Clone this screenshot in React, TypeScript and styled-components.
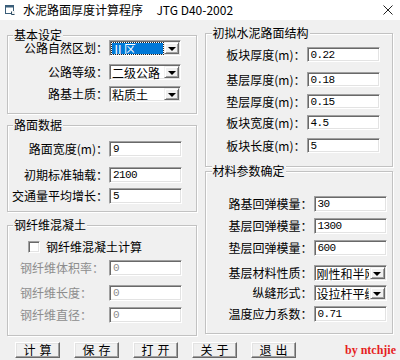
import styled, { createGlobalStyle } from "styled-components"

const Global = createGlobalStyle`
    html, body {
        margin: 0;
        padding: 0;
        background: #f0f0f0;
    }
    body {
        font-family: "Noto Sans CJK SC", "Liberation Sans", sans-serif;
        font-size: 12px;
        color: #000;
    }
`

const Window = styled.div`
    width: 400px;
    height: 360px;
    overflow: hidden;
    background: #f0f0f0;
    display: flex;
    flex-direction: column;
`

const TitleBar = styled.header`
    height: 20px;
    flex: none;
    background: #fff;
    display: flex;
    align-items: center;
    padding: 0 7px 0 5px;
`

const TitleText = styled.span`
    margin-left: 8px;
    font-size: 12px;
    line-height: 20px;
    white-space: pre;
    flex: 1;
`

const Body = styled.main`
    flex: 1;
    display: flex;
    flex-direction: column;
    padding: 0 7px;
`

const Columns = styled.div`
    display: flex;
    gap: 8px;
    align-items: flex-start;
`

const Column = styled.div<{ $w: number }>`
    width: ${p => p.$w}px;
    display: flex;
    flex-direction: column;
`

const Group = styled.section<{ $h: number, $mt: number }>`
    box-sizing: border-box;
    height: ${p => p.$h}px;
    margin-top: ${p => p.$mt}px;
    border: 1px solid #c2c2c2;
    box-shadow: inset 1px 1px 0 #fff, 1px 1px 0 #fff;
`

const Caption = styled.div<{ $ml?: number }>`
    width: fit-content;
    height: 12px;
    line-height: 12px;
    margin: -7px 0 -5px ${p => p.$ml ?? 5}px;
    padding: 0 1px;
    background: #f0f0f0;
    white-space: nowrap;
`

const Row = styled.div<{ $label: number, $field: number, $top: number, $h?: number }>`
    display: grid;
    grid-template-columns: ${p => p.$label}px ${p => p.$field}px;
    align-items: center;
    height: ${p => p.$h ?? 16}px;
    margin-top: ${p => p.$top}px;
`

const Label = styled.span<{ $left?: boolean, $muted?: boolean }>`
    white-space: nowrap;
    text-align: ${p => p.$left ? "left" : "right"};
    padding: ${p => p.$left ? "0 0 0 12px" : "0 1px 0 0"};
    color: ${p => p.$muted ? "#8d8d8d" : "#000"};
    line-height: 14px;
`

const sunken = `
    box-sizing: border-box;
    border: 1px solid;
    border-color: #a0a0a0 #fff #fff #a0a0a0;
    box-shadow: inset 1px 1px 0 #696969, inset -1px -1px 0 #e3e3e3;
    background: #fff;
`

const TextBox = styled.div<{ $h?: number, $muted?: boolean }>`
    ${sunken}
    height: ${p => p.$h ?? 16}px;
    padding: 0 3px;
    font-family: "Liberation Mono", "DejaVu Sans Mono", monospace;
    font-size: 11px;
    letter-spacing: -0.6px;
    line-height: 14px;
    color: ${p => p.$muted ? "#8d8d8d" : "#000"};
    white-space: nowrap;
    overflow: hidden;
`

const ComboBox = styled.div`
    ${sunken}
    height: 16px;
    display: flex;
    align-items: stretch;
    padding: 1px 1px 1px 2px;
`

const ComboValue = styled.span<{ $focus?: boolean }>`
    flex: 1;
    min-width: 0;
    overflow-x: clip;
    overflow-y: visible;
    white-space: nowrap;
    line-height: 12px;
    margin: 1px 1px 0 0;
    background: ${p => p.$focus ? "#0078d7" : "transparent"};
    color: ${p => p.$focus ? "#fff" : "#000"};
    outline: ${p => p.$focus ? "1px dotted #222" : "none"};
`

const DropButton = styled.span`
    box-sizing: border-box;
    width: 15px;
    flex: none;
    background: #f0f0f0;
    border: 1px solid;
    border-color: #f0f0f0 #696969 #696969 #f0f0f0;
    box-shadow: inset 1px 1px 0 #fff, inset -1px -1px 0 #a0a0a0;
    display: flex;
    align-items: center;
    justify-content: center;

    &::after {
        content: '';
        border-left: 4px solid transparent;
        border-right: 4px solid transparent;
        border-top: 4px solid #000;
        margin-top: 1px;
    }
`

const CheckRow = styled.label`
    display: flex;
    align-items: center;
    gap: 6px;
    height: 13px;
    margin: 14px 0 0 20px;
    white-space: nowrap;
`

const CheckBox = styled.span`
    ${sunken}
    width: 12px;
    height: 12px;
`

const ButtonBar = styled.div`
    display: flex;
    align-items: center;
    gap: 14px;
    margin: 6px 0 0 8px;
`

const Button = styled.button`
    box-sizing: border-box;
    width: 45px;
    height: 16px;
    padding: 0;
    font-family: inherit;
    font-size: 12px;
    line-height: 14px;
    letter-spacing: 4px;
    text-indent: 4px;
    background: #f0f0f0;
    border: 1px solid;
    border-color: #fff #696969 #696969 #fff;
    box-shadow: inset -1px -1px 0 #a0a0a0, inset 1px 1px 0 #e3e3e3;
    color: #000;
`

const Signature = styled.span`
    margin-left: auto;
    margin-right: -3px;
    font-family: "Liberation Serif", serif;
    font-weight: bold;
    font-size: 12px;
    color: #e61e1e;
`

function AppIcon() {
    return (
        <svg width="10" height="10" viewBox="0 0 10 10">
            <rect x="0.5" y="0.5" width="8" height="8" fill="#fff" stroke="#3b5f7a" />
            <rect x="0.5" y="0.5" width="8" height="2" fill="#3b5f7a" />
            <rect x="6" y="6" width="4" height="4" fill="#f0f0f0" />
            <path d="M6.5 6.5v3h3" fill="none" stroke="#2a4a62" />
        </svg>
    )
}

function CloseIcon() {
    return (
        <svg width="10" height="10" viewBox="0 0 10 10">
            <path d="M0.5 0.5l9 9M9.5 0.5l-9 9" stroke="#222" strokeWidth="1" />
        </svg>
    )
}

type Field = { label: string, value: string, top: number, combo?: boolean, focus?: boolean, h?: number }

const basic: Field[] = [
    { label: "公路自然区划：", value: "Ⅱ区", top: 4, combo: true, focus: true },
    { label: "公路等级：", value: "二级公路", top: 8, combo: true },
    { label: "路基土质：", value: "粘质土", top: 6, combo: true },
]

const road: Field[] = [
    { label: "路面宽度(m)：", value: "9", top: 15 },
    { label: "初期标准轴载：", value: "2100", top: 10 },
    { label: "交通量平均增长：", value: "5", top: 5 },
]

const fiber: Field[] = [
    { label: "钢纤维体积率：", value: "0", top: 7 },
    { label: "钢纤维长度：", value: "0", top: 9 },
    { label: "钢纤维直径：", value: "0", top: 6 },
]

const slab: Field[] = [
    { label: "板块厚度(m)：", value: "0.22", top: 13, h: 15 },
    { label: "基层厚度(m)：", value: "0.18", top: 10, h: 15 },
    { label: "垫层厚度(m)：", value: "0.15", top: 7, h: 15 },
    { label: "板块宽度(m)：", value: "4.5", top: 6, h: 15 },
    { label: "板块长度(m)：", value: "5", top: 8, h: 15 },
]

const material: Field[] = [
    { label: "路基回弹模量：", value: "30", top: 24 },
    { label: "基层回弹模量：", value: "1300", top: 6 },
    { label: "垫层回弹模量：", value: "600", top: 6 },
    { label: "基层材料性质：", value: "刚性和半刚性", top: 9, combo: true },
    { label: "纵缝形式：", value: "设拉杆平缝", top: 4, combo: true },
    { label: "温度应力系数：", value: "0.71", top: 5 },
]

function Fields({ items, label, field }: { items: Field[], label: number, field: number }) {
    return (
        <>
            {items.map(f => (
                <Row key={f.label} $label={label} $field={field} $top={f.top} $h={f.h}>
                    <Label>{f.label}</Label>
                    {f.combo
                        ? <ComboBox><ComboValue $focus={f.focus}>{f.value}</ComboValue><DropButton /></ComboBox>
                        : <TextBox $h={f.h}>{f.value}</TextBox>}
                </Row>
            ))}
        </>
    )
}

export default function App() {
    return (
        <Window>
            <Global />
            <TitleBar>
                <AppIcon />
                <TitleText>{"水泥路面厚度计算程序     JTG D40-2002"}</TitleText>
                <CloseIcon />
            </TitleBar>
            <Body>
                <Columns>
                    <Column $w={190}>
                        <Group $h={79} $mt={15}>
                            <Caption>基本设定</Caption>
                            <Fields items={basic} label={101} field={72} />
                        </Group>
                        <Group $h={87} $mt={11}>
                            <Caption>路面数据</Caption>
                            <Fields items={road} label={101} field={73} />
                        </Group>
                        <Group $h={111} $mt={13}>
                            <Caption>钢纤维混凝土</Caption>
                            <CheckRow><CheckBox />钢纤维混凝土计算</CheckRow>
                            {fiber.map(f => (
                                <Row key={f.label} $label={101} $field={73} $top={f.top}>
                                    <Label $left $muted>{f.label}</Label>
                                    <TextBox $muted>{f.value}</TextBox>
                                </Row>
                            ))}
                        </Group>
                    </Column>
                    <Column $w={189}>
                        <Group $h={134} $mt={13}>
                            <Caption $ml={6}>初拟水泥路面结构</Caption>
                            <Fields items={slab} label={101} field={73} />
                        </Group>
                        <Group $h={163} $mt={4}>
                            <Caption $ml={6}>材料参数确定</Caption>
                            <Fields items={material} label={108} field={73} />
                        </Group>
                    </Column>
                </Columns>
                <ButtonBar>
                    <Button>计算</Button>
                    <Button>保存</Button>
                    <Button>打开</Button>
                    <Button>关于</Button>
                    <Button>退出</Button>
                    <Signature>by ntchjie</Signature>
                </ButtonBar>
            </Body>
        </Window>
    )
}
